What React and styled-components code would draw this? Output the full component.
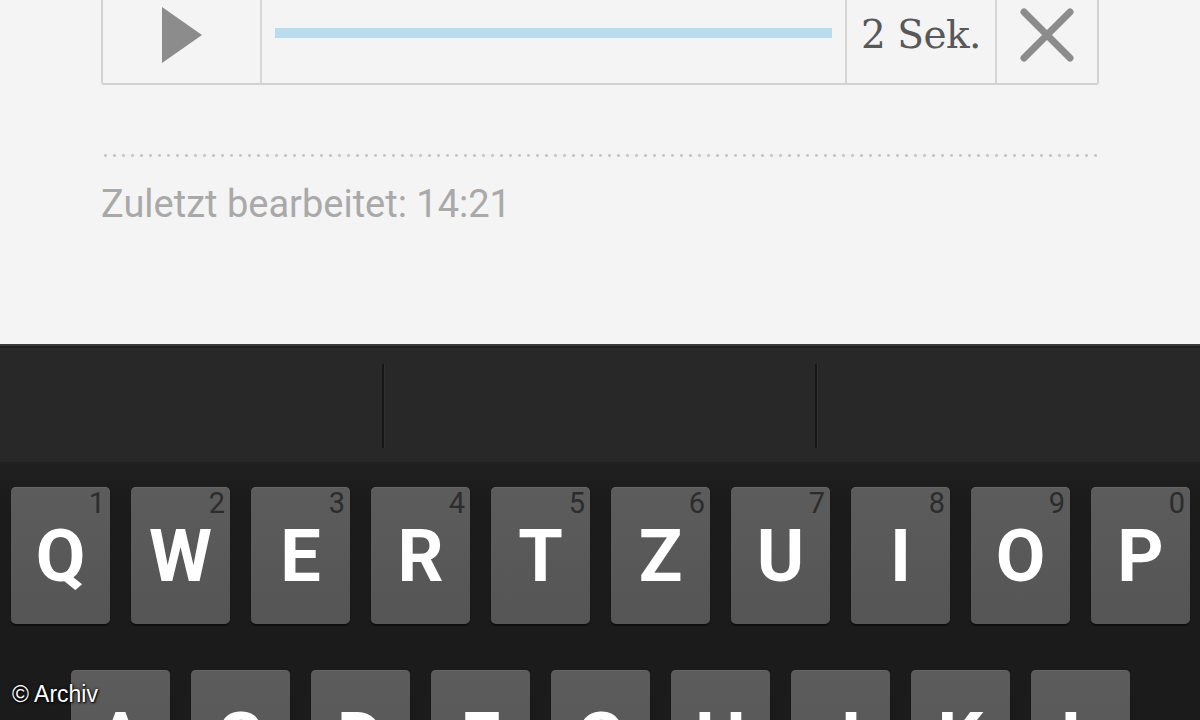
import React from "react";
import styled, { createGlobalStyle } from "styled-components";

const GlobalStyle = createGlobalStyle`
  html, body {
    margin: 0;
    padding: 0;
    width: 1200px;
    height: 720px;
    overflow: hidden;
    background: #f4f4f4;
  }
  * { box-sizing: border-box; }
`;

const rows = [
  [["Q", "1"], ["W", "2"], ["E", "3"], ["R", "4"], ["T", "5"], ["Z", "6"], ["U", "7"], ["I", "8"], ["O", "9"], ["P", "0"]],
  [["A"], ["S"], ["D"], ["F"], ["G"], ["H"], ["J"], ["K"], ["L"]],
];

export default function App() {
  return (
    <Page>
      <GlobalStyle />
      <Note>
        <Player>
          <PlayCell>
            <svg width="40" height="56" viewBox="0 0 40 56">
              <polygon points="0,0 40,28 0,56" fill="#8c8c8c" />
            </svg>
          </PlayCell>
          <TrackCell>
            <Track />
          </TrackCell>
          <TimeCell>2 Sek.</TimeCell>
          <CloseCell>
            <svg width="54" height="54" viewBox="0 0 54 54">
              <path d="M4 4 L50 50 M50 4 L4 50" stroke="#8c8c8c" strokeWidth="7" strokeLinecap="round" />
            </svg>
          </CloseCell>
        </Player>
        <Dots />
        <Edited>Zuletzt bearbeitet: 14:21</Edited>
      </Note>
      <Keyboard>
        <Suggestions>
          <Suggestion />
          <Suggestion divider />
          <Suggestion divider />
        </Suggestions>
        <Keys>
          {rows.map((row, i) => (
            <KeyRow key={i} indent={i === 1}>
              {row.map(([letter, num]) => (
                <KeySlot key={letter}>
                  <Key>
                    {num && <Digit>{num}</Digit>}
                    <Letter>{letter}</Letter>
                  </Key>
                </KeySlot>
              ))}
            </KeyRow>
          ))}
        </Keys>
      </Keyboard>
      <Watermark>© Archiv</Watermark>
    </Page>
  );
}

const Page = styled.div`
  position: relative;
  width: 1200px;
  height: 720px;
  display: flex;
  flex-direction: column;
  overflow: hidden;
`;

const Note = styled.div`
  flex: 0 0 344px;
  background: #f4f4f4;
  padding: 0 101px;
  display: flex;
  flex-direction: column;
`;

const Player = styled.div`
  display: flex;
  flex: 0 0 85px;
  border: 2px solid #d2d2d2;
  border-top: none;
  border-radius: 0 0 3px 3px;
`;

const Cell = styled.div`
  display: flex;
  align-items: center;
  justify-content: center;
  border-right: 2px solid #d6d6d6;
  &:last-child { border-right: none; }
`;

const PlayCell = styled(Cell)`
  width: 159px;
  padding-bottom: 13px;
`;

const TrackCell = styled(Cell)`
  width: 585px;
  padding: 0 13px 18px 13px;
`;

const Track = styled.div`
  height: 10px;
  width: 100%;
  background: #b9ddee;
`;

const TimeCell = styled(Cell)`
  width: 150px;
  padding-bottom: 14px;
  font-family: "DejaVu Serif", "Liberation Serif", serif;
  font-size: 39px;
  letter-spacing: -0.5px;
  color: #585858;
`;

const CloseCell = styled(Cell)`
  flex: 1;
  padding-bottom: 14px;
`;

const Dots = styled.div`
  margin-top: 69px;
  height: 3px;
  background-image: radial-gradient(circle, #c8c8c8 1.3px, transparent 1.6px);
  background-size: 9px 3px;
  background-repeat: repeat-x;
`;

const Edited = styled.div`
  margin-top: 25px;
  font-family: Roboto, "Liberation Sans", sans-serif;
  font-size: 38px;
  color: #a9a9a9;
  line-height: 44px;
`;

const Keyboard = styled.div`
  flex: 1;
  background: #1c1c1c;
  display: flex;
  flex-direction: column;
  min-height: 0;
`;

const Suggestions = styled.div`
  flex: 0 0 118px;
  background: #282828;
  border-top: 2px solid #3a3a3a;
  box-shadow: inset 0 2px 0 #1e1e1e;
  display: flex;
`;

const Suggestion = styled.div`
  flex: 0 0 ${p => (p.divider ? "433px" : "382px")};
  position: relative;
  &::before {
    content: "";
    display: ${p => (p.divider ? "block" : "none")};
    position: absolute;
    left: 0;
    top: 18px;
    bottom: 14px;
    width: 2px;
    background: #161616;
    box-shadow: 1px 0 0 #303030;
  }
`;

const Keys = styled.div`
  padding-top: 25px;
  display: flex;
  flex-direction: column;
  gap: 46px;
  background: linear-gradient(#202020, #1b1b1b 40px);
`;

const KeyRow = styled.div`
  display: flex;
  flex-shrink: 0;
  padding-left: ${p => (p.indent ? "60px" : "0")};
`;

const KeySlot = styled.div`
  width: 120px;
  flex-shrink: 0;
  padding: 0 10px 0 11px;
`;

const Key = styled.div`
  position: relative;
  height: 137px;
  border-radius: 5px;
  background: linear-gradient(#5c5c5c, #555555);
  box-shadow: 0 2px 1px rgba(0, 0, 0, 0.5), inset 0 1px 0 #666;
  display: flex;
  align-items: center;
  justify-content: center;
`;

const Letter = styled.span`
  font-family: Roboto, "Liberation Sans", sans-serif;
  font-weight: 700;
  font-size: 72px;
  color: #ffffff;
  line-height: 1;
  margin-top: 2px;
`;

const Digit = styled.span`
  position: absolute;
  top: 2px;
  right: 5px;
  font-family: Roboto, "Liberation Sans", sans-serif;
  font-size: 29px;
  color: #2c2c2c;
  line-height: 1;
`;

const Watermark = styled.div`
  position: absolute;
  left: 12px;
  top: 681px;
  font-family: "Liberation Sans", Arial, sans-serif;
  font-size: 23px;
  color: #ffffff;
  text-shadow: 0 0 3px #000, 1px 1px 2px #000;
`;
